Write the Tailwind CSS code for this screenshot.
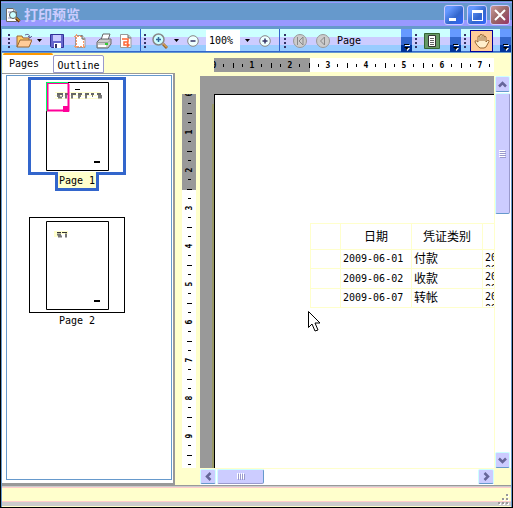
<!DOCTYPE html>
<html lang="zh-CN">
<head>
  <meta charset="UTF-8" />
  <meta name="viewport" content="width=device-width, initial-scale=1.0" />
  <title>打印预览</title>
  <script src="https://cdn.jsdelivr.net/npm/@tailwindcss/browser@4"></script>
</head>
<body class="h-screen flex flex-col overflow-hidden bg-[#ffffcc] border border-black text-black text-[10px] leading-3 font-['DejaVu_Sans_Mono','Noto_Sans_CJK_SC',monospace]">

  <!-- Shared icons -->
  <svg class="hidden">
    <symbol id="grip" viewBox="0 0 2 14"><path d="M0 0h2v2H0zM0 4h2v2H0zM0 8h2v2H0zM0 12h2v2H0z" fill="#333366" /></symbol>
    <symbol id="caret" viewBox="0 0 5 3"><path d="M0 0h5L2.500 3z" /></symbol>
    <symbol id="more" viewBox="0 0 6 7"><path d="M1 1h5v1H1zM1 4h5L3.500 7z" fill="#fff" /><path d="M0 0h5v1H0zM0 3h5L2.500 6z" /></symbol>
    <symbol id="bars" viewBox="0 0 8 7"><path d="M0 0h1v6H0zM2 0h1v6H2zM4 0h1v6H4zM6 0h1v6H6z" fill="#fff" /><path d="M1 1h1v6H1zM3 1h1v6H3zM5 1h1v6H5zM7 1h1v6H7z" fill="#9999cc" /></symbol>
    <symbol id="chevron" viewBox="0 0 9 9"><path d="M1 2.500 4.500 6 8 2.500" fill="none" stroke="#666699" stroke-width="2.500" /></symbol>
  </svg>

  <!-- Title bar -->
  <header class="h-7 shrink-0 flex items-center pl-1 pr-0.5 bg-[linear-gradient(#6699cc_1px,#9999ff_1px_2px,#6699cc_2px_19px,#9999ff_19px_25px,#6699cc_25px)]">
    <svg class="w-4 h-4 shrink-0" viewBox="0 0 16 16">
      <path d="M1.500 1.500h7l3 3v10h-10z" fill="#fff" stroke="#666" />
      <path d="M8.500 1.500v3h3" fill="#ccc" stroke="#999" />
      <path d="M3 5h3M3 11h3" stroke="#99c" />
      <circle cx="8" cy="8" r="3.500" fill="#cff" stroke="#555" />
      <path d="m11 11 3.500 3.500" stroke="#630" stroke-width="3" />
      <path d="m11 10.500 3.500 3.500" stroke="#fc6" />
    </svg>
    <h1 class="ml-[3px] flex-1 text-[14px] leading-4 font-bold text-[#ccccff]">打印预览</h1>
    <div class="flex gap-[3px]">
      <button aria-label="Minimize" class="w-5 h-5 rounded-[3px] border border-[#ccccff] bg-[linear-gradient(135deg,#6699ff_20%,#3366cc_60%,#3366ff)]">
        <svg viewBox="0 0 18 18"><path d="M4 12h7v3H4z" fill="#fff" /></svg>
      </button>
      <button aria-label="Maximize" class="w-5 h-5 rounded-[3px] border border-[#ccccff] bg-[linear-gradient(135deg,#6699ff_20%,#3366cc_60%,#3366ff)]">
        <svg viewBox="0 0 18 18"><path d="M4 4h11v11H4zM5 7v7h9V7z" fill="#fff" fill-rule="evenodd" /></svg>
      </button>
      <button aria-label="Close" class="w-5 h-5 rounded-[3px] border border-[#ccccff] bg-[linear-gradient(135deg,#cc9999,#996666_50%,#993366)]">
        <svg viewBox="0 0 18 18"><path d="m4 4 10 10M14 4 4 14" stroke="#fff" stroke-width="2" /></svg>
      </button>
    </div>
  </header>

  <!-- Toolbars -->
  <nav class="h-6 shrink-0 flex pl-[3px] border-x border-[#6699cc] bg-[linear-gradient(#ccffff_8px,#ccccff_8px_16px,#99ccff_16px_22px,#3366cc_22px_23px,#6699cc_23px)]">
    <div class="w-[136px] h-[23px] flex items-center pl-[3px] border-r border-[#3366cc]">
      <svg class="w-[2px] h-3.5"><use href="#grip" /></svg>
      <button aria-label="Open" class="ml-1.5 w-4">
        <svg class="w-4 h-4" viewBox="0 0 16 16"><path d="M1 14V3h5l1 2h6v3" fill="#fc6" stroke="#963" /><path d="m1 14 3-7h12l-3 7z" fill="#fc9" stroke="#963" /><path d="M9 2q4-2 5 2m-2-1 2 2 2-2" fill="none" stroke="#669" /></svg>
      </button>
      <button aria-label="Open menu" class="ml-[5px] w-[5px]"><svg class="w-[5px] h-[3px]"><use href="#caret" /></svg></button>
      <button aria-label="Save" class="ml-2 w-3.5">
        <svg class="w-3.5 h-3.5" viewBox="0 0 14 14"><path d="M.5.5h13v13h-12l-1-1z" fill="#66c" stroke="#339" /><path d="M3 1h8v6H3z" fill="#ccf" /><path d="M4 9h7v5H4z" fill="#fff" /><path d="M5 10h2v4H5z" fill="#336" /></svg>
      </button>
      <button aria-label="Page setup" class="ml-2.5 w-3">
        <svg class="w-3 h-3.5" viewBox="0 0 12 14"><path d="M1.500 1.500H8l3 3v9H1.500z" fill="#fff" stroke="#999" /><path d="M2.500 0v14M9.500 4v10M0 2.500h8M0 12.500h12" stroke="#f96" stroke-dasharray="2 1" /><path d="M8 1v4h3" fill="#ccc" stroke="#666" /></svg>
      </button>
      <button aria-label="Print" class="ml-2.5 w-4">
        <svg class="w-4 h-4" viewBox="0 0 16 16"><path d="m5 7 2-6h7l-2 6z" fill="#fff" stroke="#666" /><path d="m1 9 3-3h11v5l-3 4H1z" fill="#ccc" stroke="#666" /><path d="M1 9.500h11l3-3" fill="none" stroke="#999" /><path d="M2 12h8v2H2z" fill="#fff" /><path d="M9 10h3v2H9z" fill="#3c3" /></svg>
      </button>
      <button aria-label="Scale" class="ml-2 w-3">
        <svg class="w-3 h-3.5" viewBox="0 0 12 14"><path d="M.5.5H8l3 3v10H.5z" fill="#fff" stroke="#999" /><path d="M8 1v3h3" fill="#ccc" stroke="#666" /><path d="M2 5h6v3H4v3h5M7 9l2 2-2 2" fill="none" stroke="#f63" stroke-width="1.500" /></svg>
      </button>
    </div>

    <div class="w-[139px] h-[23px] flex items-center pl-[3px] border-r border-[#3366cc]">
      <svg class="w-[2px] h-3.5"><use href="#grip" /></svg>
      <button aria-label="Zoom" class="ml-1.5 w-4">
        <svg class="w-4 h-4" viewBox="0 0 16 16"><circle cx="6.500" cy="6.500" r="5.500" fill="#cff" stroke="#888" stroke-width="1.500" /><path d="M4 6.500h5M6.500 4v5" stroke="#369" stroke-width="1.500" /><path d="m11 11 4 4" stroke="#963" stroke-width="3" /><path d="m11 10.500 4 4" stroke="#fc6" /></svg>
      </button>
      <button aria-label="Zoom menu" class="ml-1.5 w-[5px]"><svg class="w-[5px] h-[3px]"><use href="#caret" /></svg></button>
      <button aria-label="Zoom out" class="ml-2 w-3">
        <svg class="w-3 h-3" viewBox="0 0 12 12"><circle cx="6" cy="6" r="5.300" fill="#eff" stroke="#888" /><path d="M3.500 6h5" stroke="#336" stroke-width="1.500" /></svg>
      </button>
      <input aria-label="Zoom level" value="100%" class="ml-[7px] w-[34px] h-[21px] pl-[3px] bg-white outline-none" />
      <button aria-label="Zoom levels" class="ml-[5px] w-[5px]"><svg class="w-[5px] h-[3px]"><use href="#caret" /></svg></button>
      <button aria-label="Zoom in" class="ml-[9px] w-3">
        <svg class="w-3 h-3" viewBox="0 0 12 12"><circle cx="6" cy="6" r="5.300" fill="#eff" stroke="#888" /><path d="M3.500 6h5M6 3.500v5" stroke="#336" stroke-width="1.500" /></svg>
      </button>
    </div>

    <div class="flex-1 h-[23px] flex items-center pl-1">
      <svg class="w-[2px] h-3.5"><use href="#grip" /></svg>
      <button aria-label="First page" class="ml-[7px] w-3.5">
        <svg class="w-3.5 h-3.5" viewBox="0 0 14 14"><circle cx="7" cy="7" r="6.500" fill="#ccc" stroke="#999" /><path d="M4.500 3v8M10 3v8L6 7z" fill="#ccc" stroke="#888" /></svg>
      </button>
      <button aria-label="Previous page" class="ml-[9px] w-3.5">
        <svg class="w-3.5 h-3.5" viewBox="0 0 14 14"><circle cx="7" cy="7" r="6.500" fill="#ccc" stroke="#999" /><path d="M8.500 3v8l-4-4z" fill="#ccc" stroke="#888" /></svg>
      </button>
      <span class="ml-[7px] flex-1">Page</span>
      <button aria-label="More page tools" class="w-[11px] h-full flex items-end justify-center pb-px bg-[linear-gradient(#6699ff_8px,#3366cc_8px_16px,#003399_16px)]"><svg class="w-1.5 h-[7px]"><use href="#more" /></svg></button>
    </div>

    <div class="w-[49px] h-[23px] flex items-center pl-[3px]">
      <svg class="w-[2px] h-3.5"><use href="#grip" /></svg>
      <button aria-label="Document map" class="ml-[7px] w-4">
        <svg class="w-4 h-4" viewBox="0 0 16 16"><path d="M.5.5h15v15H.5z" fill="#696" stroke="#363" /><path d="M4.500 2.500h7v11h-7z" fill="#fff" stroke="#333" /><path d="M6 5.500h4M6 7.500h4M6 9.500h4M6 11.500h4" stroke="#666" /></svg>
      </button>
      <button aria-label="More view tools" class="ml-auto w-[11px] h-full flex items-end justify-center pb-px bg-[linear-gradient(#6699ff_8px,#3366cc_8px_16px,#003399_16px)]"><svg class="w-1.5 h-[7px]"><use href="#more" /></svg></button>
    </div>

    <div class="w-[50px] h-[23px] flex items-center pl-[3px]">
      <svg class="w-[2px] h-3.5"><use href="#grip" /></svg>
      <button aria-label="Hand tool" class="ml-1 w-[23px] h-[22px] flex items-center justify-center border border-[#000099] bg-[#ffcc99]">
        <svg class="w-4 h-4" viewBox="0 0 16 16"><path d="M4 9V3.500q1-1 2 0V2q1-1.500 2 0v.5q1-1.500 2 0V4q1-1.500 2 0v5l1.500-1.500q2-.5 1.500 1L12 14l-2 1H6q-3-2-5-6 0-2 1.500-1z" fill="#fec" stroke="#963" /><path d="M6 4v4M8 3v5M10 4v4" stroke="#963" /></svg>
      </button>
      <button aria-label="More tools" class="ml-auto w-[11px] h-full flex items-end justify-center pb-px bg-[linear-gradient(#6699ff_8px,#3366cc_8px_16px,#003399_16px)]"><svg class="w-1.5 h-[7px]"><use href="#more" /></svg></button>
    </div>
  </nav>

  <main class="flex-1 min-h-0 flex border-x border-[#6699cc]">
    <!-- Thumbnails -->
    <aside class="w-[173px] shrink-0 flex flex-col">
      <div role="tablist" class="h-5 flex items-end pl-px">
        <button role="tab" aria-selected="true" class="w-[50px] h-5 pl-1.5 text-left rounded-t-[2px] border-t-2 border-[#ff9900] bg-white">Pages</button>
        <button role="tab" aria-selected="false" class="w-[51px] h-[18px] pt-1 rounded-t-[2px] border border-[#9999cc] bg-white">Outline</button>
      </div>
      <div class="flex-1 min-h-0 pt-px pb-[3px] pl-1 pr-px bg-white border-t border-r-2 border-b-2 border-[#999999]">
        <div class="h-full flex flex-col items-start pl-[21px] pt-px border border-[#6699cc] bg-white">
          <button class="w-[98px] flex flex-col items-center">
            <span class="w-full h-[98px] flex items-center justify-center border-[3px] border-[#3366cc]">
              <svg class="w-[63px] h-[89px]" viewBox="0 0 63 89">
                <path d="M.5.5h62v88H.5z" fill="#fff" stroke="#000" />
                <path d="M29 7.500h5" stroke="#000" />
                <path d="M48 80h6" stroke="#000" stroke-width="2" />
                <path d="M9 10.500h45M9 13.500h45M9 16.500h45" stroke="#ffc" />
                <path d="M11 12h6m2 0h3m3 0h5m2 0h4m3 0h4m2 0h3m3 0h4" stroke="#666" stroke-width="2" />
                <path d="M11 14h3m2 0h1m2 0h2m4 0h2m5 0h3m4 0h2m5 0h1m5 0h4M12 15.500h4m3 0h2m4 0h2m5 0h2m5 0h2m11 0h4" stroke="#777" stroke-width="2" />
                <path d="M1.500 2v26.500h21V2" fill="none" stroke="#f09" stroke-width="2" />
                <path d="M1 1.500h22" stroke="#f09" />
                <path d="M17 24h6v6h-6z" fill="#f09" />
                <path d="M.5 29V.5H22" fill="none" stroke="#0f6" />
              </svg>
            </span>
            <span class="-mt-[3px] w-11 h-[19px] pt-px flex items-center justify-center border-[3px] border-t-0 border-[#3366cc] bg-[#ffffcc] text-nowrap">Page 1</span>
          </button>
          <button class="mt-[26px] w-[98px] flex flex-col items-center">
            <span class="w-24 h-24 flex items-center justify-center border border-black">
              <svg class="w-[63px] h-[89px]" viewBox="0 0 63 89">
                <path d="M.5.5h62v88H.5z" fill="#fff" stroke="#000" />
                <path d="M8 11.500h14M8 14.500h6" stroke="#ffc" stroke-width="3" />
                <path d="M11 11.500h4m1 0h5" stroke="#333" />
                <path d="M11 13.500h4m4 0h2M12 15.500h4m3 0h2" stroke="#777" stroke-width="2" />
                <path d="M48 80h6" stroke="#000" stroke-width="2" />
              </svg>
            </span>
            <span class="mt-0.5">Page 2</span>
          </button>
        </div>
      </div>
    </aside>

    <!-- Preview -->
    <section class="flex-1 min-w-0 flex flex-col pt-[5px] pl-[7px]">
      <div class="h-[18px] shrink-0 pl-8 pr-[17px]">
        <svg id="rulerX" class="block w-full h-3.5 bg-white text-[8px] font-bold"></svg>
      </div>
      <div class="flex-1 min-h-0 flex">
        <div class="w-3.5 shrink-0 mt-[18px]">
          <svg id="rulerY" class="block w-full h-full bg-white text-[8px] font-bold"></svg>
        </div>
        <div class="relative ml-1 flex-1 min-w-0 overflow-hidden pt-[18px] pl-3.5 bg-[#999999]">
          <div class="h-full w-full pt-32 pl-[95px] border-t border-l border-black bg-white shadow-[-2px_10px_0_#999966]">
            <table class="table-fixed w-[244px] border-collapse [&_td]:border [&_td]:border-[#ffffcc] [&_th]:border [&_th]:border-[#ffffcc] [&_th]:font-normal [&_td]:p-0 [&_td]:pl-0.5 [&_th]:p-0">
              <colgroup>
                <col class="w-[30px]" /><col class="w-[71px]" /><col class="w-[71px]" /><col class="w-[72px]" />
              </colgroup>
              <tr class="h-[26px] text-[12px]"><th></th><th>日期</th><th>凭证类别</th><th></th></tr>
              <tr class="h-[19px]"><td></td><td>2009-06-01</td><td class="text-[12px]">付款</td><td class="align-top"><div class="mt-0.5 h-[15px] overflow-hidden">20<br />09</div></td></tr>
              <tr class="h-[20px]"><td></td><td>2009-06-02</td><td class="text-[12px]">收款</td><td class="align-top"><div class="mt-0.5 h-[15px] overflow-hidden">20<br />09</div></td></tr>
              <tr class="h-[19px]"><td></td><td>2009-06-07</td><td class="text-[12px]">转帐</td><td class="align-top"><div class="mt-0.5 h-[15px] overflow-hidden">20<br />09</div></td></tr>
            </table>
          </div>
          <!-- Mouse pointer -->
          <svg class="absolute left-[108px] top-[235px] w-3 h-[21px]" viewBox="0 0 12 21"><path d="M.5.5v16l3.500-3.500 3 7 3-1-3-7h5z" fill="#fff" stroke="#000" /></svg>
        </div>
        <div class="w-[17px] shrink-0 flex flex-col bg-white border-l border-[#ffffcc]">
          <button aria-label="Scroll up" class="w-[15px] h-4 flex items-center justify-center rounded-[2px] border border-b-[#6699cc] border-[#ccffff] bg-[#ccccff]"><svg class="w-[9px] h-[9px] rotate-180"><use href="#chevron" /></svg></button>
          <div class="mt-px w-[15px] h-[121px] flex items-center justify-center rounded-[2px] border border-[#ccffff] border-r-[#9999cc] border-b-[#6699cc] bg-[#ccccff]"><svg class="w-[7px] h-2" viewBox="0 0 7 8"><path d="M0 0h6v1H0zM0 2h6v1H0zM0 4h6v1H0zM0 6h6v1H0z" fill="#fff" /><path d="M1 1h6v1H1zM1 3h6v1H1zM1 5h6v1H1zM1 7h6v1H1z" fill="#9999cc" /></svg></div>
          <button aria-label="Scroll down" class="mt-auto w-[15px] h-4 flex items-center justify-center rounded-[2px] border border-b-[#6699cc] border-[#ccffff] bg-[#ccccff]"><svg class="w-[9px] h-[9px]"><use href="#chevron" /></svg></button>
        </div>
      </div>
      <div class="h-[17px] shrink-0 ml-[18px] mr-[17px] flex bg-white border-t border-[#ffffcc]">
        <button aria-label="Scroll left" class="w-4 h-[15px] flex items-center justify-center rounded-[2px] border border-b-[#6699cc] border-[#ccffff] bg-[#ccccff]"><svg class="w-[9px] h-[9px] rotate-90"><use href="#chevron" /></svg></button>
        <div class="ml-px w-[47px] h-[15px] flex items-center justify-center rounded-[2px] border border-[#ccffff] border-r-[#6699cc] border-b-[#9999cc] bg-[#ccccff]"><svg class="w-2 h-[7px]"><use href="#bars" /></svg></div>
        <button aria-label="Scroll right" class="ml-auto w-4 h-[15px] flex items-center justify-center rounded-[2px] border border-b-[#6699cc] border-[#ccffff] bg-[#ccccff]"><svg class="w-[9px] h-[9px] -rotate-90"><use href="#chevron" /></svg></button>
      </div>
    </section>
  </main>

  <!-- Status bar -->
  <footer class="h-[22px] shrink-0 flex items-end justify-end pr-0.5 pb-0.5 border-x border-x-[#6699cc] bg-[linear-gradient(#999999_1px,#cccccc_1px_2px,#ffcccc_2px_3px,#ffffcc_3px_16px,#ffcccc_16px_17px,#cccccc_17px_21px,#ffffcc_21px)]">
    <svg class="w-[11px] h-[11px]" viewBox="0 0 11 11">
      <path d="M9 1h2v2H9zM5 5h2v2H5zM9 5h2v2H9zM1 9h2v2H1zM5 9h2v2H5zM9 9h2v2H9z" fill="#fff" />
      <path d="M8 0h2v2H8zM4 4h2v2H4zM8 4h2v2H8zM0 8h2v2H0zM4 8h2v2H4zM8 8h2v2H8z" fill="#999" />
    </svg>
  </footer>

  <script>
    const UNIT = 38;
    const MARGIN = 96;

    // Quarter ticks are short, half ticks are long, whole units carry a number
    function drawRuler(ruler, vertical, units) {
      let out = vertical
        ? `<rect width="14" height="${MARGIN}" fill="#999"/>`
        : `<rect width="${MARGIN}" height="14" fill="#999"/>`;
      for (let i = 0; i < units * 4; i++) {
        const pos = Math.floor(i * UNIT / 4);
        if (i % 4 === 0) {
          const place = vertical ? `translate(7 ${pos}) rotate(-90)` : `translate(${pos} 7)`;
          out += `<text transform="${place}" y="3" text-anchor="middle">${i / 4}</text>`;
        } else {
          const len = i % 4 === 2 ? 5 : 3;
          const start = i % 4 === 2 ? 5 : 6;
          out += vertical
            ? `<rect x="${start}" y="${pos}" width="${len}" height="1"/>`
            : `<rect x="${pos}" y="${start}" width="1" height="${len}"/>`;
        }
      }
      ruler.innerHTML = out;
    }

    function setupRuler(id, vertical, units) {
      const ruler = document.getElementById(id);
      drawRuler(ruler, vertical, units);
      // Add units when the pane grows
      new ResizeObserver(([entry]) => {
        const { width, height } = entry.contentRect;
        const needed = Math.ceil((vertical ? height : width) / UNIT);
        if (needed > units) {
          units = needed;
          drawRuler(ruler, vertical, units);
        }
      }).observe(ruler);
    }

    setupRuler('rulerX', false, 8);
    setupRuler('rulerY', true, 10);
  </script>
</body>
</html>
